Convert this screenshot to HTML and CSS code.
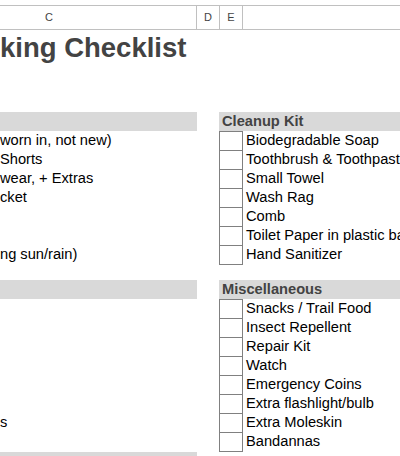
FILE: index.html
```html
<!DOCTYPE html>
<html>
<head>
<meta charset="utf-8">
<link rel="stylesheet" href="styles.css">
</head>
<body>
<div class="sheet">
  <div class="colhead">
    <div class="ch ch-c">C</div>
    <div class="ch ch-d">D</div>
    <div class="ch ch-e">E</div>
    <div class="ch ch-f"></div>
  </div>
  <div class="title">king Checklist</div>

  <div class="section">
    <div class="band-left"></div>
    <div class="gap"></div>
    <div class="band-right">Cleanup Kit</div>

    <div class="left">worn in, not new)</div><div class="gap"></div><div class="box"></div><div class="item">Biodegradable Soap</div>
    <div class="left">Shorts</div><div class="gap"></div><div class="box"></div><div class="item">Toothbrush &amp; Toothpaste</div>
    <div class="left">wear, + Extras</div><div class="gap"></div><div class="box"></div><div class="item">Small Towel</div>
    <div class="left">cket</div><div class="gap"></div><div class="box"></div><div class="item">Wash Rag</div>
    <div class="left"></div><div class="gap"></div><div class="box"></div><div class="item">Comb</div>
    <div class="left"></div><div class="gap"></div><div class="box"></div><div class="item">Toilet Paper in plastic bag</div>
    <div class="left">ng sun/rain)</div><div class="gap"></div><div class="box last"></div><div class="item">Hand Sanitizer</div>
  </div>

  <div class="section second">
    <div class="band-left"></div>
    <div class="gap"></div>
    <div class="band-right">Miscellaneous</div>

    <div class="left"></div><div class="gap"></div><div class="box"></div><div class="item">Snacks / Trail Food</div>
    <div class="left"></div><div class="gap"></div><div class="box"></div><div class="item">Insect Repellent</div>
    <div class="left"></div><div class="gap"></div><div class="box"></div><div class="item">Repair Kit</div>
    <div class="left"></div><div class="gap"></div><div class="box"></div><div class="item">Watch</div>
    <div class="left"></div><div class="gap"></div><div class="box"></div><div class="item">Emergency Coins</div>
    <div class="left"></div><div class="gap"></div><div class="box"></div><div class="item">Extra flashlight/bulb</div>
    <div class="left">s</div><div class="gap"></div><div class="box"></div><div class="item">Extra Moleskin</div>
    <div class="left"></div><div class="gap"></div><div class="box last"></div><div class="item">Bandannas</div>
  </div>

  <div class="section third">
    <div class="band-left"></div>
    <div class="gap"></div>
    <div class="blank"></div>
  </div>
</div>
</body>
</html>
```

FILE: styles.css
```css
html, body {
  margin: 0;
  padding: 0;
  background: #ffffff;
}

body {
  width: 400px;
  height: 456px;
  overflow: hidden;
  font-family: "Liberation Sans", Arial, sans-serif;
}

.sheet {
  width: 400px;
  overflow: hidden;
}

.colhead {
  margin-top: 5px;
  display: grid;
  grid-template-columns: 197px 23px 23px 1fr;
  border-top: 1px solid #c0c0c0;
  border-bottom: 1px solid #c0c0c0;
  height: 23px;
}

.ch {
  font-size: 11px;
  color: #444444;
  line-height: 23px;
  text-align: center;
  border-right: 1px solid #c0c0c0;
}

.ch-c {
  text-align: left;
  padding-left: 45px;
}

.ch-f {
  border-right: none;
}

.title {
  height: 82px;
  box-sizing: border-box;
  padding-top: 4px;
  font-size: 27.5px;
  line-height: 27px;
  font-weight: bold;
  color: #434343;
  white-space: nowrap;
}

.section {
  display: grid;
  grid-template-columns: 197px 22px 24px 1fr;
  grid-auto-rows: auto;
  font-size: 14.67px;
  line-height: 19px;
  white-space: nowrap;
}

.section.second {
  margin-top: 15px;
}

.band-left {
  background: #d9d9d9;
  height: 19px;
}

.band-right {
  grid-column: 3 / 5;
  background: #d9d9d9;
  height: 19px;
  font-weight: bold;
  color: #434343;
  padding-left: 3px;
  overflow: hidden;
}

.left {
  color: #000000;
  overflow: hidden;
}

.box {
  box-sizing: border-box;
  height: 19px;
  border: 1px solid #808080;
  border-bottom: none;
}

.box.last {
  height: 20px;
  border-bottom: 1px solid #808080;
}

.item {
  color: #000000;
  padding-left: 3px;
  overflow: hidden;
}

.blank {
  grid-column: 3 / 5;
}
```
